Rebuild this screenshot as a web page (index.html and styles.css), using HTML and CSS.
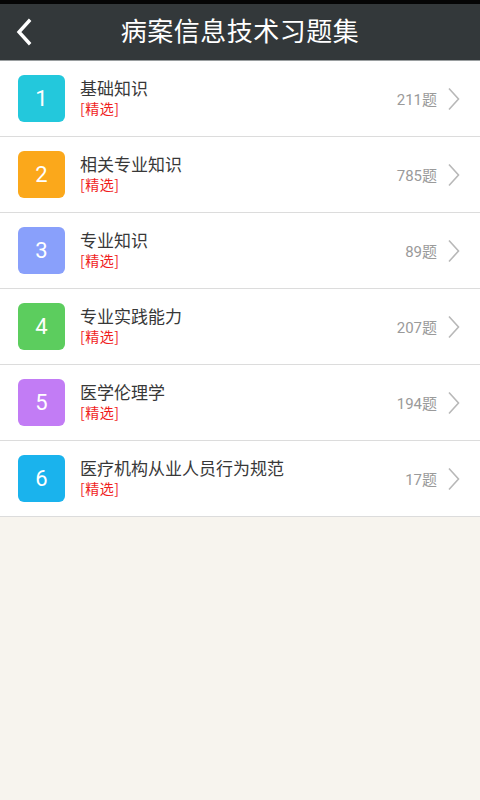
FILE: index.html
```html
<!DOCTYPE html>
<html lang="zh-CN">
<head>
	<meta charset="UTF-8">
	<meta name="viewport" content="width=device-width, initial-scale=1.0">
	<title>病案信息技术习题集</title>
	<link rel="stylesheet" href="styles.css">
</head>
<body>

	<!-- Status strip -->
	<div class="status-bar"></div>

	<!-- Header -->
	<div class="header">
		<button class="back-btn">
			<svg width="20" height="28" viewBox="0 0 20 28"><path d="M15 3 L5 14 L15 25" fill="none" stroke="#fff" stroke-width="3.4" stroke-linecap="square"/></svg>
		</button>
		<div class="header-title">病案信息技术习题集</div>
	</div>

	<!-- Chapter list -->
	<ul class="chapter-list">
		<li class="chapter">
			<div class="chapter-num num-1">1</div>
			<div class="chapter-text">
				<div class="chapter-name">基础知识</div>
				<div class="chapter-tag">[精选]</div>
			</div>
			<div class="chapter-count">211题</div>
			<svg class="chevron" width="14" height="24" viewBox="0 0 14 24"><path d="M2 1.5 L11.5 12 L2 22.5" fill="none" stroke="#b8b8b8" stroke-width="1.6"/></svg>
		</li>
		<li class="chapter">
			<div class="chapter-num num-2">2</div>
			<div class="chapter-text">
				<div class="chapter-name">相关专业知识</div>
				<div class="chapter-tag">[精选]</div>
			</div>
			<div class="chapter-count">785题</div>
			<svg class="chevron" width="14" height="24" viewBox="0 0 14 24"><path d="M2 1.5 L11.5 12 L2 22.5" fill="none" stroke="#b8b8b8" stroke-width="1.6"/></svg>
		</li>
		<li class="chapter">
			<div class="chapter-num num-3">3</div>
			<div class="chapter-text">
				<div class="chapter-name">专业知识</div>
				<div class="chapter-tag">[精选]</div>
			</div>
			<div class="chapter-count">89题</div>
			<svg class="chevron" width="14" height="24" viewBox="0 0 14 24"><path d="M2 1.5 L11.5 12 L2 22.5" fill="none" stroke="#b8b8b8" stroke-width="1.6"/></svg>
		</li>
		<li class="chapter">
			<div class="chapter-num num-4">4</div>
			<div class="chapter-text">
				<div class="chapter-name">专业实践能力</div>
				<div class="chapter-tag">[精选]</div>
			</div>
			<div class="chapter-count">207题</div>
			<svg class="chevron" width="14" height="24" viewBox="0 0 14 24"><path d="M2 1.5 L11.5 12 L2 22.5" fill="none" stroke="#b8b8b8" stroke-width="1.6"/></svg>
		</li>
		<li class="chapter">
			<div class="chapter-num num-5">5</div>
			<div class="chapter-text">
				<div class="chapter-name">医学伦理学</div>
				<div class="chapter-tag">[精选]</div>
			</div>
			<div class="chapter-count">194题</div>
			<svg class="chevron" width="14" height="24" viewBox="0 0 14 24"><path d="M2 1.5 L11.5 12 L2 22.5" fill="none" stroke="#b8b8b8" stroke-width="1.6"/></svg>
		</li>
		<li class="chapter">
			<div class="chapter-num num-6">6</div>
			<div class="chapter-text">
				<div class="chapter-name">医疗机构从业人员行为规范</div>
				<div class="chapter-tag">[精选]</div>
			</div>
			<div class="chapter-count">17题</div>
			<svg class="chevron" width="14" height="24" viewBox="0 0 14 24"><path d="M2 1.5 L11.5 12 L2 22.5" fill="none" stroke="#b8b8b8" stroke-width="1.6"/></svg>
		</li>
	</ul>

</body>
</html>
```

FILE: styles.css
```css
	body {
		font-family: Roboto, "Noto Sans CJK SC", sans-serif;
		background-color: #f7f4ee;
		margin: 0;
		padding: 0;
		height: 100vh;
	}

	.status-bar {
		height: 4px;
		background-color: #050505;
	}

	.header {
		height: 56px;
		background-color: #33383a;
		border-bottom: 1px solid #9a9ea0;
		display: flex;
		align-items: center;
		justify-content: center;
		position: relative;
	}

	.back-btn {
		position: absolute;
		left: 10px;
		top: 14px;
		background: transparent;
		border: none;
		padding: 0;
		width: 28px;
		height: 28px;
		display: flex;
		align-items: center;
		justify-content: center;
	}

	.header-title {
		color: #ffffff;
		font-size: 26px;
		line-height: 30px;
		letter-spacing: 0.5px;
		margin-top: -1px;
	}

	.chapter-list {
		list-style: none;
		margin: 0;
		padding: 0;
		background-color: #ffffff;
	}

	.chapter {
		height: 75px;
		border-bottom: 1px solid #dcdcdc;
		display: flex;
		align-items: center;
		padding: 0 19px 0 18px;
	}

	.chapter-num {
		width: 47px;
		height: 47px;
		border-radius: 6px;
		color: #ffffff;
		font-size: 22px;
		display: flex;
		align-items: center;
		justify-content: center;
		flex-shrink: 0;
	}

	.num-1 { background-color: #23c8dc; }
	.num-2 { background-color: #fba81b; }
	.num-3 { background-color: #89a0fb; }
	.num-4 { background-color: #5ccd5e; }
	.num-5 { background-color: #c27cf5; }
	.num-6 { background-color: #1ab3ed; }

	.chapter-text {
		flex: 1;
		margin-left: 15px;
		display: flex;
		flex-direction: column;
	}

	.chapter-name {
		color: #383838;
		font-size: 17px;
		line-height: 20px;
	}

	.chapter-tag {
		color: #f01e1e;
		font-size: 14px;
		line-height: 19px;
		font-family: "Noto Sans CJK SC", sans-serif;
		letter-spacing: 0.5px;
	}

	.chapter-count {
		color: #9a9a9a;
		font-size: 15px;
		margin-right: 10px;
	}

	.chevron {
		flex-shrink: 0;
	}
```
